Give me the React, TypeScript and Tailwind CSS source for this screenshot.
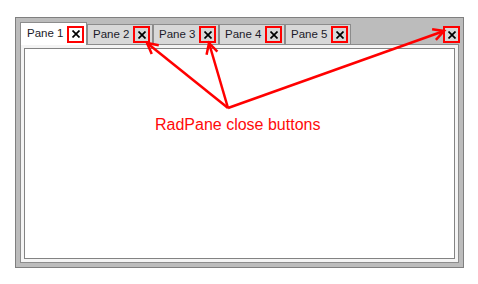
import { Fragment } from 'react'

const tabs = [
  { label: 'Pane 1', selected: true },
  { label: 'Pane 2' },
  { label: 'Pane 3' },
  { label: 'Pane 4' },
  { label: 'Pane 5' },
]

// origin of the callout arrows and where each one points
const origin = { x: 228, y: 108 }
const tips = [
  { x: 147, y: 43 },
  { x: 209, y: 43 },
  { x: 444, y: 31 },
]

function CloseButton({ selected }: { selected?: boolean }) {
  return (
    <span
      className={`flex h-[17px] w-[17px] shrink-0 items-center justify-center border-2 border-[#ff0000] ${
        selected ? 'bg-white' : 'bg-[#d8d8d8]'
      }`}
    >
      <svg width="8" height="8" viewBox="0 0 8 8" aria-hidden>
        <path d="M0.5 0.5 L7.5 7.5 M7.5 0.5 L0.5 7.5" stroke="#000" strokeWidth="1.7" />
      </svg>
    </span>
  )
}

function arrowHead(tip: { x: number; y: number }) {
  const dx = tip.x - origin.x
  const dy = tip.y - origin.y
  const len = Math.hypot(dx, dy)
  const ux = dx / len
  const uy = dy / len
  const a = (28 * Math.PI) / 180
  const size = 12
  const side = (s: number) => {
    const rx = ux * Math.cos(s * a) - uy * Math.sin(s * a)
    const ry = ux * Math.sin(s * a) + uy * Math.cos(s * a)
    return `${tip.x - rx * size},${tip.y - ry * size}`
  }
  return `M${side(1)} L${tip.x},${tip.y} L${side(-1)}`
}

export default function App() {
  return (
    <div
      className="relative h-[284px] w-[478px] overflow-hidden bg-white pl-[15px] pt-[17px]"
      style={{ fontFamily: '"Liberation Sans", Arial, sans-serif' }}
    >
      <div className="flex h-[251px] w-[449px] flex-col border border-[#7f7f7f] bg-[#bcbcbc]">
        {/* tab strip */}
        <div className="flex h-[26px] items-end pl-[4px] pr-[3px]">
          {tabs.map((t) => (
            <div
              key={t.label}
              className={`flex items-center justify-between border border-b-0 border-[#8c8c8c] pr-[2px] text-[11.5px] text-[#1b1b2a] ${
                t.selected
                  ? 'relative z-10 -mb-px h-[23px] w-[67px] bg-white pl-[6px]'
                  : 'h-[20px] w-[66px] bg-[#d8d8d8] pl-[5px]'
              }`}
            >
              <span>{t.label}</span>
              <CloseButton selected={t.selected} />
            </div>
          ))}
          <div className="ml-auto mb-[1px]">
            <CloseButton />
          </div>
        </div>

        {/* content */}
        <div className="mx-[4px] mb-[4px] flex-1 border border-[#8c8c8c] bg-[#f4f4f4] p-[3px]">
          <div className="h-full border border-[#838383] bg-white pl-[130px] pt-[64px]">
            <span className="text-[16px] text-[#ff0a0a]">RadPane close buttons</span>
          </div>
        </div>
      </div>

      <svg
        className="pointer-events-none absolute left-0 top-0"
        width="478"
        height="284"
        viewBox="0 0 478 284"
        aria-hidden
      >
        {tips.map((tip, i) => (
          <Fragment key={i}>
            <line x1={origin.x} y1={origin.y} x2={tip.x} y2={tip.y} stroke="#ff0000" strokeWidth="2.5" />
            <path d={arrowHead(tip)} fill="none" stroke="#ff0000" strokeWidth="2.5" />
          </Fragment>
        ))}
      </svg>
    </div>
  )
}
